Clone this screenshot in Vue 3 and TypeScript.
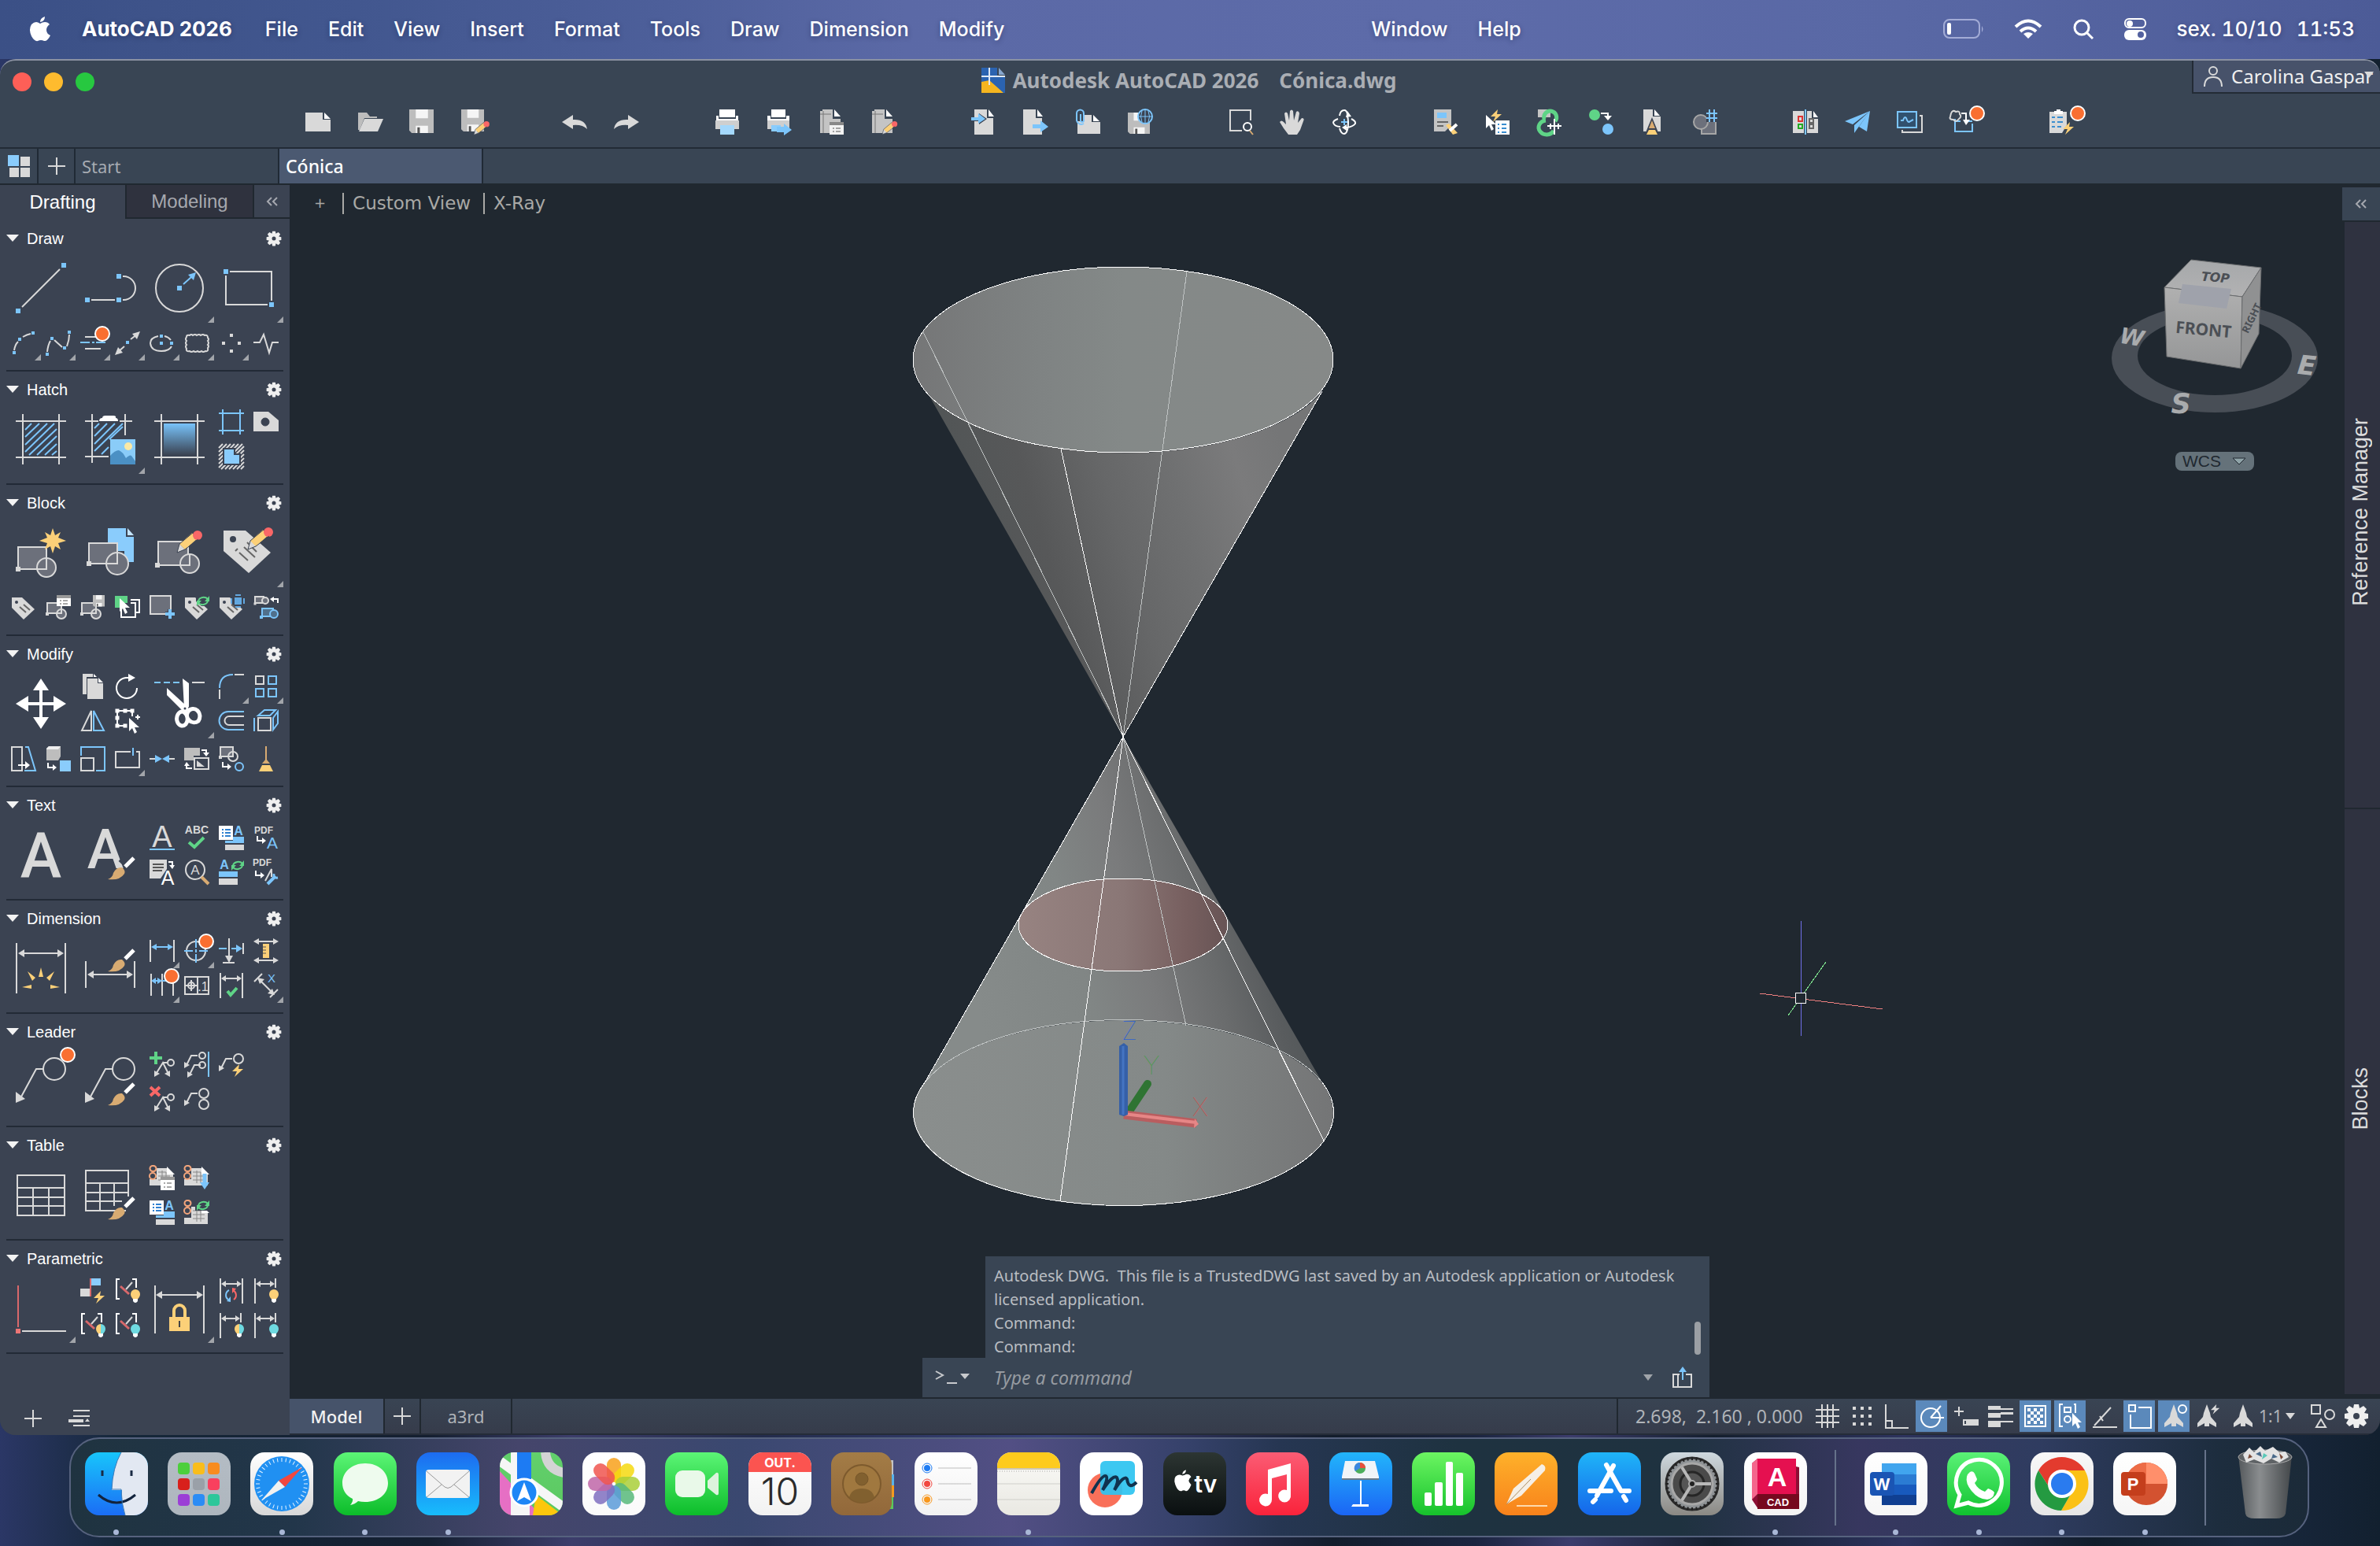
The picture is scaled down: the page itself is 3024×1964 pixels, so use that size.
<script setup lang="ts">
import { ref } from 'vue'

interface Tool {
  icon: string
  col: number
  row: number
  big?: boolean
  more?: boolean
  badge?: boolean
}
interface Section {
  title: string
  tools: Tool[]
}

const L = '#d9d9d9'
const B = '#7cc5fb'
const W = '#ffffff'
const Y = '#fcd078'
const G = '#5fd487'
const R = '#f96767'
const S = '#6c707b'
const P = '#3b4352'

const ln = (d: string, c = L, w = 2) => `<path d="${d}" stroke="${c}" stroke-width="${w}" fill="none"/>`
const fl = (d: string, c = L) => `<path d="${d}" fill="${c}"/>`
const sq = (x: number, y: number, c = B, s = 6) => `<rect x="${x - s / 2}" y="${y - s / 2}" width="${s}" height="${s}" fill="${c}"/>`
const rc = (x: number, y: number, w: number, h: number, f = 'none', c = L, sw = 2) =>
  `<rect x="${x}" y="${y}" width="${w}" height="${h}" fill="${f}" stroke="${c}" stroke-width="${sw}"/>`
const ci = (x: number, y: number, r: number, f = 'none', c = L, sw = 2) =>
  `<circle cx="${x}" cy="${y}" r="${r}" fill="${f}" stroke="${c}" stroke-width="${sw}"/>`
const at = (x: number, y: number, s: string) => `<g transform="translate(${x} ${y})">${s}</g>`
const tx = (x: number, y: number, size: number, t: string, c = L, w = 400, f = 'Liberation Sans') =>
  `<text x="${x}" y="${y}" font-size="${size}" font-weight="${w}" fill="${c}" text-anchor="middle" font-family="${f}, sans-serif">${t}</text>`

const brush = fl('M29 29Q35 27 36 21Q40 13 47 14Q52 18 50 22Q44 31 29 29Z', '#d8ab72') + ln('M51 13L62 2', W, 5)
const pencil = fl('M0 28L3 17L10 24Z', L) + fl('M3 17L19 3L26 10L10 24Z', Y) + `<circle cx="26" cy="6" r="6" fill="${R}"/>` + ln('M0 28L3 17L21 2M0 28L10 24L27 11', P, 1)
const bolt = (c = Y) => fl('M9 0L0 9H6L3 16L14 6H8Z', c)
const page = (c = L) => fl('M4 0H20V11H28V32H4Z', c) + fl('M22 0L29 9H22Z', W)
const floppy = (w: number) => `<g transform="scale(${w / 30})">` + fl('M0 0H30V29H3L0 26Z', '#bdbdbd') + fl('M8 0H23V11H8ZM8 20H23V29H8Z', '#f5f5f5') + fl('M10 22H13V29H10Z', '#555') + '</g>'
const cycle = (c = G) => ln('M2 7A7 6 0 0 1 14 5M14 8A7 6 0 0 1 2 10', c, 2) + fl('M16 1V8H10ZM0 14V7H6Z', c)
const cursor = (x: number, y: number, c = W) => at(x, y, fl('M0 0V17L4 13L7 20L10 18L7 12H13Z', c))
const hook = ln('M1 0V6H8', W, 2) + fl('M7 2L12 6L7 10Z', W)
const tag = fl('M1 3H14L30 18L16 31L1 16Z') + `<circle cx="7" cy="9" r="2" fill="${P}"/>` + ln('M11 15L19 22M16 12L24 19', '#666', 2)
const blk = rc(3, 25, 36, 28, S) + ci(39, 51, 12, S) + ln('M27 53H39V40', L) + sq(3, 53, L)
const blkS = rc(2, 10, 18, 13, S) + ci(20, 24, 6, S) + ln('M14 23H20V18', L) + sq(2, 24, L, 4)
const frame = (c = L, w = 2) => ln('M9 0V64M55 0V64M0 9H64M0 55H64', c, w)
const tagBig = fl('M0 4H28L60 32L32 58L0 30Z') + `<circle cx="12" cy="15" r="4" fill="${P}"/>` + ln('M20 32L31 42M26 25L40 38M15 30L18 27M30 19L42 31', '#666', 2)
const stackA = fl('M0 1H18V19H0Z', W) + ln('M4 6H6M8 6H15M4 10H6M8 10H15M4 14H6M8 14H15', '#2f80d0', 2) + tx(25, 13, 16, 'A', B, 700) + fl('M18 15H32V23H8V20H18Z', B) + fl('M8 25H32V32H8Z')
const hdim = (y = 7, x2 = 30) => ln(`M2 0V32M${x2} 0V32`) + ln(`M6 ${y}H${x2 - 4}`) + fl(`M3 ${y}L9 ${y - 4}V${y + 4}ZM${x2 - 1} ${y}L${x2 - 7} ${y - 4}V${y + 4}Z`)
const bracket = ln('M6 1H2V26H6M22 1H27V12', W) + ln('M7 10L18 20', '#d9686b', 3) + ln('M14 14L22 5', L, 2)
const bulb = (l: string, r: string) => fl('M20 20A6 6 0 0 1 26 14V27H24Q20 24 20 20Z', l) + fl('M32 20A6 6 0 0 0 26 14V27H28Q32 24 32 20Z', r) + fl('M23 26H29V29Q26 33 23 29Z', W)
const chain = ln('M4 1H5A3 3 0 0 1 5 8H4A3 3 0 0 1 4 1M4 10A3 3 0 0 1 4 18A3 3 0 0 1 4 10', '#f2a57c', 2)
const sheet = fl('M0 18H9V4H22L30 12V26H0Z', L) + fl('M22 2L32 12H22Z', W) + ln('M11 9H21M11 14H26M11 19H26M16 7V23M21 9V23', '#888', 1)
const twin = ln('M7 30L17 14L25 30M17 14H22') + ci(27, 14, 4) + fl('M6 24V32L13 28ZM26 24V32L19 28Z')
const zig = (x: number, y: number) => ln(`M${x} ${y + 12}L${x + 6} ${y}H${x + 14}`) + fl(`M${x - 3} ${y + 8}V${y + 16}L${x + 4} ${y + 12}Z`)
const anno = fl('M16 1L20 12L21 17L28 25V30L19 25V29H13V25L4 30V25L11 17L12 12Z')

const icons: Record<string, string> = {
  // draw
  line: ln('M8 56L56 8') + sq(3, 61) + sq(61, 3),
  polyline: ln('M8 47H38M48 17H49A15 15 0 0 1 49 47H48') + sq(3, 47) + sq(43, 47) + sq(43, 17),
  circle: ci(32, 32, 30) + sq(32, 32) + ln('M37 27L47 18', B) + fl('M53 12L50 22L43 15Z', B),
  rect: ln('M8 11H61V48M56 53H3V16') + sq(3, 11) + sq(61, 53),
  arc: ln('M4 25Q5 18 9 14M15 8Q20 5 25 4') + sq(4, 28, B, 4) + sq(11, 11, B, 4) + sq(28, 3, B, 4),
  spline: ln('M2 27Q3 18 6 13M11 12L21 21M27 20Q30 12 30 5') + sq(2, 30, B, 4) + sq(8, 10, B, 4) + sq(24, 22, B, 4) + sq(30, 2, B, 4),
  xline: ln('M6 8H22M6 23H26') + ln('M0 15H12M15 15H18M20 15H32', B),
  ray: ln('M4 27L12 20M20 11L28 5') + sq(16, 15, B, 4) + fl('M32 1L22 4L28 11ZM0 31L10 28L4 21Z'),
  ellipse: ln('M11 7Q1 9 1 16Q2 26 15 26Q25 26 28 20M19 7Q24 8 27 12') + sq(15, 7, B, 4) + sq(15, 16, B, 4) + sq(28, 16, B, 4),
  cloud: ln('M3 8Q3 5 7 6Q9 4 11 6Q14 4 16 6Q19 4 21 6Q24 4 26 6Q30 5 30 9Q32 11 30 13Q32 16 30 18Q32 20 30 22Q31 27 27 26Q24 28 22 26Q19 28 17 26Q14 28 12 26Q9 28 7 26Q2 27 3 23Q1 20 3 18Q1 16 3 13Q1 11 3 8Z'),
  points: sq(16, 6, L, 4) + sq(6, 16, L, 4) + sq(26, 16, L, 4) + sq(16, 26, L, 4),
  wave: ln('M0 15H8L13 5L20 28L24 15H32'),
  // hatch
  hatch: frame() + ln('M12 20L20 12M12 29L30 12M12 39L40 12M12 48L49 12M17 52L52 19M27 52L52 28M37 52L52 38M46 52L52 47', B),
  hatchImg: ln('M9 0V62M51 0V27M0 9H17M44 9H60M0 54H30') + fl('M18 9Q18 5 22 5Q22 2 26 2H36Q40 2 39 5Q42 5 42 9Z', W) + ln('M12 18L18 12M12 28L28 12M12 38L38 12M12 47L48 12M21 51L30 42M31 32L48 16', B) + fl('M32 32H64V64H32Z', '#8accf8') + `<circle cx="55" cy="41" r="5" fill="#fbe9a6"/>` + fl('M32 53Q38 46 43 46Q48 48 52 56Q57 51 59 53L64 60V64H32Z', '#4b90c4'),
  gradient: '<defs><linearGradient id="hg" x1="0" y1="0" x2="0" y2="1"><stop offset="0" stop-color="#78c3fa"/><stop offset="1" stop-color="#3b4352"/></linearGradient></defs>' + frame() + fl('M12 12H52V52H12Z', 'url(#hg)'),
  boundary: ln('M5 0V32M27 0V32M0 5H32M0 27H32', B),
  wipeout: fl('M0 3H19L32 14V28H0Z') + ci(15, 16, 5, P, P, 1),
  island: ln('M0 5L5 0M0 10L10 0M0 15L15 0M0 20L20 0M0 25L25 0M0 30L30 0M3 32L32 3M8 32L32 8M13 32L32 13M18 32L32 18M23 32L32 23M28 32L32 28') + fl('M5 5H21V12H28V27H5Z', P) + fl('M7 7H19V14H26V25H7Z', '#8accfc'),
  // block
  blockNew: blk + fl('M47 1L50 10L57 6L54 13L64 17L54 20L57 28L50 24L47 33L44 24L37 28L40 20L30 17L40 13L37 6L44 10Z', Y),
  blockInsert: fl('M29 1H52V12H62V44H50V30H42V20H29Z', '#8accfc') + fl('M54 1L62 10H54Z', '#c4e4fc') + rc(5, 20, 36, 26, S) + ci(41, 46, 14, S) + ln('M28 46H41V33') + sq(5, 46, L),
  blockEdit: rc(5, 18, 38, 30, S) + ci(45, 46, 12, S) + ln('M33 48H45V34') + sq(4, 48, L) + at(29, 4, pencil),
  attrEdit: tagBig + at(31, 0, pencil),
  tag,
  blkA: blkS + fl('M14 0H32V14H14Z', W) + fl('M14 0H32V4H14Z', '#999') + ln('M18 7H20M22 7H28M18 11H20M22 11H28', '#555', 1),
  blkB: blkS + at(16, 0, floppy(15)),
  blkC: fl('M0 1H16V10H8V16H0Z', G) + ln('M20 6H31V22H27M8 18V28H26V10H20', W) + cursor(6, 4),
  blkD: rc(1, 1, 26, 23, S) + ln('M20 24H32M26 18V30', P, 6) + ln('M20 24H32M26 18V30', B, 4),
  blkE: tag + fl('M15 0H32V14H22L15 8Z', P) + at(16, 0, cycle()),
  blkF: tag + fl('M15 0H32V16H22L15 10Z', P) + fl('M20 3H29V12H20Z', '#63a8e0') + ln('M16 4V11M32 4V11M21 0H28M21 15H28', '#63a8e0', 2),
  blkG: rc(2, 2, 11, 8, S) + ci(15, 7, 4, S) + sq(2, 11, L, 3) + at(21, 2, ln('M10 8V3H4', W) + fl('M5 0V7L0 3Z', W)) + rc(11, 17, 14, 10, '#50708c', B) + ci(26, 24, 5, '#50708c', B) + sq(10, 28, B, 4),
  // modify
  move: ln('M32 10V54M10 32H54', W, 4) + fl('M32 0L42 15H22ZM32 64L42 49H22ZM0 32L16 22V42ZM64 32L48 22V42Z', W),
  copy: fl('M3 0H16V4H8V26H3Z') + fl('M9 6H22V12H29V32H9Z') + fl('M23 5L29 11H23ZM17 0L21 4H17Z', W),
  rotate: ln('M20 5H14A13 13 0 1 0 28 18', W) + fl('M17 0L26 5L17 10Z', W),
  trim: ln('M0 5H8M12 5H20M24 5H32', B) + ln('M48 5H64') + fl('M36 0L44 6V36L38 38ZM16 12L40 34L35 40L16 21Z', W) + ci(39, 38, 3, P, W, 3) + ln('M36 42A7 9 0 1 0 40 58A9 10 0 0 0 36 42M43 42A8 9 0 1 1 56 54A9 9 0 0 1 43 42', W, 5),
  fillet: ln('M1 18Q1 1 18 1', B) + ln('M20 1H32M1 20V32'),
  array: rc(3, 3, 10, 10) + rc(19, 3, 10, 10, 'none', B) + rc(3, 19, 10, 10, 'none', B) + rc(19, 19, 10, 10, 'none', B),
  mirror: ln('M14 3V28H2Z') + ln('M17 3V28H30Z', B),
  stretchSel: ln('M3 3H22M3 3V22H14M22 3V10', W, 2) + sq(3, 3, W, 5) + sq(13, 3, W, 5) + sq(22, 3, W, 5) + sq(3, 12, W, 5) + sq(3, 22, W, 5) + sq(13, 22, W, 5) + cursor(18, 12) + ln('M26 11H32M29 8V14', W),
  offset: ln('M32 4H12A11 11 0 0 0 12 27H32', B) + ln('M32 10H13A5 5 0 0 0 13 21H32'),
  solidedit: rc(6, 12, 16, 16) + ln('M1 12V29M6 9L14 2H28L21 9ZM25 12L31 4V19L25 27Z', B),
  stretch: rc(1, 1, 13, 30) + ln('M18 1H22L31 31H17', B) + ln('M9 24H20', W) + fl('M18 19L24 24L18 29Z', W),
  copyTo: fl('M1 3L4 0H19V13L16 18H1Z', '#bdbdbd') + fl('M1 3L4 0H19L16 4H1Z', '#eee') + at(2, 21, hook) + fl('M18 18H32V32H18Z', '#8accfc'),
  scale: ln('M1 12V1H31V31H20', B) + rc(1, 15, 16, 16),
  breakAt: ln('M20 7H1V27H31V7H27') + ln('M23 2V12', B),
  join: ln('M0 16H8M24 16H32') + fl('M7 11L16 16L7 21ZM25 11L16 16L25 21Z', B),
  reorder: fl('M0 2H20V12H12V18H0Z', '#bdbdbd') + rc(13, 15, 18, 14) + fl('M16 18L26 26H16Z') + ln('M22 5H28V10M3 24V28H10', W) + fl('M24 8H32L28 13ZM0 25H7L3 20Z', W),
  convert: rc(2, 1, 16, 12, S) + ci(18, 13, 6) + sq(2, 14, L, 4) + at(4, 20, hook) + ci(26, 26, 5, 'none', B),
  purge: ln('M16 0V20', '#d8ab72') + fl('M16 16L21 22H11Z', '#d8ab72') + fl('M11 24H21L25 32H7Z', Y),
  // text
  mtext: tx(32, 60, 79, 'A', L, 500, 'Roboto'),
  textStyle: tx(26, 49, 70, 'A', L, 500, 'Roboto') + ln('M47 44L60 30', P, 12) + at(0, 34, brush),
  textA: tx(16, 28, 38, 'A', L) + ln('M0 31H32', B),
  spell: tx(16, 11, 14, 'ABC', L, 700) + ln('M6 22L13 28L25 16', G, 4),
  textB: stackA,
  pdfA: tx(13, 11, 12, 'PDF', L, 700) + at(4, 14, hook) + tx(24, 30, 21, 'A', B),
  textC: fl('M0 0H22V12L14 24H0Z') + ln('M4 6H18M4 10H18M4 14H16', '#555', 2) + ln('M24 3H29V9', W) + fl('M25 7H32L29 12Z', W) + tx(23, 32, 25, 'A', W),
  find: ci(14, 13, 12) + tx(14, 19, 17, 'A', L) + ln('M22 22L31 31', '#d8ab72', 4),
  textD: tx(7, 12, 16, 'A', B, 700) + at(16, 0, cycle()) + fl('M0 15H24V22H0Z', B) + fl('M0 24H24V32H0Z'),
  pdfB: tx(11, 8, 12, 'PDF', L, 700) + at(2, 14, hook) + ln('M15 27L23 12V22') + ln('M18 31L28 21', B, 4) + ln('M26 18Q25 24 31 23', B, 3),
  // dimension
  dimAuto: ln('M1 0V64M63 0V64') + ln('M6 13H58') + fl('M3 13L11 8V18ZM61 13L53 8V18Z') + fl('M32 31L35 43H29ZM15 36L25 44L21 48ZM49 36L39 44L43 48ZM8 56L20 53V58ZM56 56L44 53V58Z', Y),
  dimStyle: ln('M1 23V57M63 23V57M6 40H58') + fl('M3 40L11 35V45ZM61 40L53 35V45Z') + at(0, 7, brush),
  dimA: ln('M1 2V30M31 2V30') + ln('M4 11H28', B) + fl('M2 11L9 7V15ZM30 11L23 7V15Z', B),
  dimB: ci(15, 16, 12) + ln('M15 1V12M15 20V31M0 16H11M19 16H30M15 14V18', B),
  dimC: ln('M13 0V22M5 31H20M31 6V20') + fl('M8 22H18L13 31Z') + ln('M0 13H10M16 13H22', B) + fl('M22 8L30 13L22 18Z', B),
  dimD: ln('M2 4H30M2 28H30') + fl('M0 4L7 0V8ZM32 4L25 0V8ZM0 28L7 24V32ZM32 28L25 24V32Z') + fl('M12 7H20V25H12Z', Y) + ln('M12 11H16M12 15H16M12 19H16', '#555', 1),
  dimE: ln('M2 1V29M16 1V29M30 8V29') + ln('M4 10H14M16 10H22', B) + fl('M2 10L8 6V14ZM16 10L10 6V14Z', B),
  dimF: rc(1, 5, 30, 22) + ln('M17 5V27') + ci(9, 16, 4) + ln('M9 9V23M2 16H16') + tx(24, 23, 16, '.1', L),
  dimG: hdim() + ln('M11 23L15 28L23 19', G, 4),
  dimH: ln('M1 11L11 1M21 31L31 21M8 9L24 25') + fl('M5 6L14 8L8 14ZM27 28L18 26L24 20Z') + tx(23, 12, 15, 'X', B),
  // leader
  leader: ci(49, 16, 14) + ln('M35 16H26L6 53') + fl('M0 45V59L12 54Z'),
  leaderStyle: ci(49, 16, 14) + ln('M35 16H26L6 53') + fl('M0 45V59L12 54Z') + at(0, 33, brush),
  ldA: twin + ln('M0 8H16M8 0V16', G, 4),
  ldB: zig(3, 5) + ci(23, 5, 4) + zig(7, 17) + ci(23, 17, 4) + ln('M31 0V32', B),
  ldC: zig(3, 9) + ci(25, 9, 6) + at(17, 16, bolt()),
  ldD: twin + ln('M1 1L13 12M13 1L1 12', R, 4),
  ldE: zig(3, 9) + ci(25, 9, 6) + ci(25, 23, 6),
  // table
  table: rc(2, 7, 60, 51) + ln('M2 23H62M2 35H62M2 46H62M22 23V58M42 23V58'),
  tableStyle: ln('M52 52H1V1H55V34M1 17H55M1 29H55M1 40H47M19 17V52M37 17V46') + at(0, 34, brush),
  tbA: sheet + chain + fl('M14 15H32V32H14Z', W) + fl('M14 15H32V19H14Z', '#999') + ln('M18 23H20M22 23H28M18 28H20M22 28H28', '#555', 1),
  tbB: sheet + chain + ln('M26 11V24', B, 5) + fl('M20 22H32L26 31Z', B),
  tbC: stackA,
  tbD: at(0, 5, sheet) + fl('M14 0H32V14H14Z', P) + chain + at(16, 0, cycle()),
  // parametric
  perp: ln('M3 3V56', '#d9686b') + ln('M8 61H64') + sq(3, 61, '#ec7575'),
  parA: fl('M0 13H12V23H0Z') + fl('M14 0H26V9H14Z', '#8accfc') + ln('M13 0V23', '#d9686b') + at(17, 16, bolt()),
  parB: bracket + bulb(Y, Y),
  parC: bracket + bulb(Y, '#6ed9e0'),
  parD: bracket + bulb('#6ed9e0', '#6ed9e0'),
  lock: ln('M1 3V64M63 3V64M6 15H58') + fl('M2 15L10 10V20ZM62 15L54 10V20Z') + fl('M19 43H45V61H19Z', Y) + ln('M25 43V35A7 7 0 0 1 39 35V43', Y, 4) + ln('M32 48V56', '#444', 2),
  pmA: hdim(7) + ln('M13 15A7 7 0 0 0 12 27', B) + ln('M18 15A7 7 0 0 1 19 27', R) + fl('M10 29L15 23V30Z', B) + fl('M22 13L17 19V12Z', R),
  pmB: hdim(7, 28) + fl('M19 12H32V32H19Z', P) + bulb(Y, Y),
  pmC: hdim(7, 28) + fl('M19 12H32V32H19Z', P) + bulb(Y, '#6ed9e0'),
  pmD: hdim(7, 28) + fl('M19 12H32V32H19Z', P) + bulb('#6ed9e0', '#6ed9e0'),
  // toolbar
  new: fl('M0 4H22V13H32V28H0Z') + fl('M24 4L32 12H24Z', W),
  open: fl('M1 4H12L16 9H25V11H9L3 26H1Z', '#bdbdbd') + fl('M9 12H33L26 28H2Z'),
  save: floppy(31),
  saveAs: floppy(29) + `<g transform="translate(16 15) scale(.62)">${pencil}</g>`,
  undo: fl('M0 16L14 7V13Q30 12 32 25Q26 19 14 20V25Z'),
  redo: fl('M32 16L18 7V13Q2 12 0 25Q6 19 18 20V25Z'),
  print: fl('M6 0H26V10H6Z', W) + fl('M2 8H5V12H27V8H30V22H27V19H5V22H2Z', W) + fl('M1 14H31V25H1Z', '#cfcfcf') + fl('M7 20H25V32H7Z', '#a4d8fc'),
  printTo: fl('M6 0H24V10H6Z', W) + fl('M1 8H5V12H25V8H29V14H1Z', W) + fl('M1 14H29V25H1Z', '#cfcfcf') + fl('M6 20H18V28H6Z', '#8accfc') + fl('M13 22H22V18L32 26L22 33V29H13Z', B),
  pageSetup: fl('M2 2H5V0H18V12H28V30H2Z', '#c4c4c4') + fl('M20 0L28 9H20Z', W) + ln('M2 6H16M6 2V30', '#777', 1) + fl('M14 17H32V32H14Z', '#f2f2f2') + fl('M14 16H32V20H14Z', '#888') + ln('M18 24H20M22 24H28M18 28H20M22 28H28', '#555', 1),
  pageEdit: fl('M2 2H5V0H18V12H28V30H2Z', '#c4c4c4') + fl('M20 0L28 9H20Z', W) + ln('M2 6H16M6 2V30', '#777', 1) + `<g transform="translate(15 15) scale(.6)">${pencil}</g>`,
  import: page() + fl('M0 10H10V5L20 12L10 19V15H0Z', P) + fl('M0 10H9V5L18 12L9 18V14H0Z', B),
  export: at(-4, 0, page()) + fl('M12 19H22V14L32 22L22 29V24H12Z', B),
  attach: at(3, 7, fl('M0 8H8V0H18V9H29V24H0Z') + fl('M20 0L28 8H20Z', W)) + ln('M7 6V14A2 2 0 0 0 11 14V5A4 4 0 0 0 2 5V14A6 6 0 0 0 11 18', B),
  saveWeb: at(1, 4, floppy(28)) + ci(23, 9, 9, P, B) + ln('M23 0V18M14 9H32M19 2Q16 9 19 16M27 2Q30 9 27 16', B, 1),
  zoomWin: ln('M18 27H3V1H29V14') + ci(25, 22, 5, 'none', W) + ln('M28 27L32 32', '#d8ab72'),
  pan: fl('M11 32L5 24L0 16Q2 13 5 16L8 19L6 5Q8 2 10 5L12 14L13 2Q15 -1 17 2L18 14L21 3Q24 1 25 5L23 17L28 11Q32 11 30 15L26 26L22 32Z'),
  orbit: ln('M10 8Q11 1 16 1Q19 1 20 6M10 24Q12 31 16 31Q21 30 21 16Q21 11 20 9M8 12Q2 14 2 17Q4 22 11 22M25 12Q31 15 30 18Q27 22 19 23', W) + ln('M12 16H20M16 12V20', B) + fl('M20 2L25 9L18 10ZM19 19V27L13 23Z', W),
  tbProp: fl('M2 0H24V20L16 28H2Z', '#c4c4c4') + fl('M6 4H18V11H6Z', B) + ln('M6 16H20M6 21H14', '#666', 2) + fl('M17 20L21 18L32 30L26 32Z', Y) + ln('M22 27L31 19', W, 4),
  tbSel: at(8, 0, bolt()) + cursor(2, 7) + fl('M14 14H32V32H14Z', W) + ln('M17 19H19M22 19H28M17 24H19M22 24H28M17 29H19M22 29H28', '#3a8ed0', 2),
  tbCount: fl('M2 0H18V10H2Z', '#c4c4c4') + ln('M10 12A8 8 0 1 1 24 15M12 14A10 9 0 1 0 22 27', G, 5) + ln('M14 21H32M23 12V32M18 18V25M28 18V25', W, 2),
  tbSwap: ci(8, 7, 7, G, G, 0) + ci(25, 25, 7, B, B, 0) + ln('M16 5H25V9', W) + fl('M20 8H30L25 14Z', W),
  tbPurge: fl('M4 0H16V9H26V28H4Z') + fl('M18 0L25 8H18Z', W) + fl('M15 10L20 22L24 32H6L10 22Z', P) + fl('M15 14L19 24H11Z', '#d8ab72') + fl('M11 26H19L22 32H8Z', Y),
  tbHash: rc(12, 14, 18, 17, S, '#a6a6a6') + ci(11, 16, 9, S, '#a6a6a6') + fl('M18 0H32V16H18Z', P) + ln('M22 0V16M28 0V16M18 5H32M18 11H32', B),
  compare: fl('M0 2H14V30H0Z') + fl('M18 2H24V12H32V30H18Z') + fl('M26 2L32 10H26Z', W) + ln('M16 0V32', B) + rc(7, 9, 5, 6, 'none', '#d33', 2) + rc(7, 19, 5, 5, 'none', '#2a2', 2) + rc(21, 12, 5, 5, 'none', '#666', 2) + rc(21, 19, 5, 5, 'none', '#666', 2),
  send: fl('M32 2L0 15L10 19ZM32 2L12 20V30L17 23ZM32 2L18 22L28 28Z', B),
  sheetSet: rc(1, 3, 24, 20, '#31516e', B) + ln('M5 14H8Q10 8 12 11Q14 18 17 15L21 13', B) + ln('M29 8H32V29H7V26'),
  markup: ln('M8 12V28H30V18M8 15H15M23 15H30', B) + ln('M3 5Q5 0 9 3Q14 1 14 6Q17 9 13 12Q9 17 6 13Q0 13 2 9Z') + ln('M16 5H22V14', W) + fl('M18 13H27L22 20Z', W),
  paste: fl('M0 3H22V20L16 30H0Z') + fl('M6 2H9V0H14V2H17V6H6Z', W) + ln('M3 10H7M10 10H17M3 16H7M10 16H17M3 22H7M10 22H15', '#3a8ed0', 2) + at(17, 16, bolt()),
  // status bar
  grid: ln('M9 1V31M16 1V31M23 1V31M1 8H31M1 16H31M1 24H31'),
  snap: [6, 16, 26].map((x) => [6, 16, 26].map((y) => sq(x, y, L, 4)).join('')).join(''),
  ortho: ln('M2 1V31H31M2 22H10V31'),
  polar: ci(15, 18, 12, 'none', W) + ln('M15 18H32M15 18L28 3', W),
  dyn: ln('M1 10H13M7 4V16') + fl('M12 20H32V28H12Z') + fl('M14 22H16V26H14Z', P),
  lwt: fl('M0 3H16V6H32V8H0Z') + fl('M0 12H16V11H32V14H16V18H0Z') + fl('M0 22H32V24H16V30H0Z'),
  transp: rc(3, 3, 26, 26, 'none', W) + [0, 1, 2, 3, 4].map((r) => [0, 1, 2, 3, 4].map((c) => ((r + c) % 2 ? '' : sq(8 + c * 4, 8 + r * 4, W, 4))).join('')).join(''),
  cycleSel: ln('M7 1H3V29H7M21 1H23V12', W) + rc(9, 5, 8, 6, 'none', W) + ci(13, 20, 4, 'none', W) + at(19, 12, fl('M0 0V17L4 13L7 20L10 18L7 12H12Z', W)),
  angle: ln('M1 30H32M3 28L24 5M10 16L14 22'),
  osnap: rc(3, 2, 8, 8, 'none', W) + ln('M15 5H31V31H5V14', W),
  annoA: anno + ci(27, 7, 5, 'none', W),
  annoB: at(-2, 0, anno) + at(19, 1, `<g transform="scale(.8)">${bolt(L)}</g>`),
  annoC: anno,
  workspace: rc(3, 2, 11, 11) + ci(26, 14, 6) + ln('M15 20L21 30H9Z'),
  gear: fl('M13 1H19L20 6L25 3L29 7L26 12L31 13V19L26 20L29 25L25 29L20 26L19 31H13L12 26L7 29L3 25L6 20L1 19V13L6 12L3 7L7 3L12 6Z', '#efefef') + ci(16, 16, 4, P, P, 0),
}

const t = (icon: string, col: number, row: number, extra: Partial<Tool> = {}): Tool => ({ icon, col, row, ...extra })
const big = (icon: string, col: number, extra: Partial<Tool> = {}): Tool => ({ icon, col, row: 1, big: true, ...extra })
const more = { more: true }

const sections: Section[] = [
  { title: 'Draw', tools: [big('line', 1), big('polyline', 3), big('circle', 5, more), big('rect', 7, more), t('arc', 1, 3, more), t('spline', 2, 3, more), t('xline', 3, 3, { more: true, badge: true }), t('ray', 4, 3, more), t('ellipse', 5, 3, more), t('cloud', 6, 3, more), t('points', 7, 3, more), t('wave', 8, 3)] },
  { title: 'Hatch', tools: [big('hatch', 1), big('hatchImg', 3, more), big('gradient', 5), t('boundary', 7, 1), t('wipeout', 8, 1), t('island', 7, 2)] },
  { title: 'Block', tools: [big('blockNew', 1), big('blockInsert', 3), big('blockEdit', 5), big('attrEdit', 7, more), t('tag', 1, 3), t('blkA', 2, 3), t('blkB', 3, 3), t('blkC', 4, 3), t('blkD', 5, 3), t('blkE', 6, 3), t('blkF', 7, 3), t('blkG', 8, 3)] },
  { title: 'Modify', tools: [big('move', 1), t('copy', 3, 1), t('rotate', 4, 1), big('trim', 5, more), t('fillet', 7, 1, more), t('array', 8, 1, more), t('mirror', 3, 2), t('stretchSel', 4, 2), t('offset', 7, 2), t('solidedit', 8, 2), t('stretch', 1, 3), t('copyTo', 2, 3), t('scale', 3, 3), t('breakAt', 4, 3, more), t('join', 5, 3), t('reorder', 6, 3), t('convert', 7, 3), t('purge', 8, 3)] },
  { title: 'Text', tools: [big('mtext', 1), big('textStyle', 3), t('textA', 5, 1), t('spell', 6, 1), t('textB', 7, 1), t('pdfA', 8, 1), t('textC', 5, 2), t('find', 6, 2), t('textD', 7, 2), t('pdfB', 8, 2)] },
  { title: 'Dimension', tools: [big('dimAuto', 1), big('dimStyle', 3), t('dimA', 5, 1, more), t('dimB', 6, 1, { more: true, badge: true }), t('dimC', 7, 1), t('dimD', 8, 1), t('dimE', 5, 2, { more: true, badge: true }), t('dimF', 6, 2), t('dimG', 7, 2), t('dimH', 8, 2, more)] },
  { title: 'Leader', tools: [big('leader', 1, { badge: true }), big('leaderStyle', 3), t('ldA', 5, 1), t('ldB', 6, 1), t('ldC', 7, 1), t('ldD', 5, 2), t('ldE', 6, 2)] },
  { title: 'Table', tools: [big('table', 1), big('tableStyle', 3), t('tbA', 5, 1), t('tbB', 6, 1), t('tbC', 5, 2), t('tbD', 6, 2)] },
  { title: 'Parametric', tools: [big('perp', 1, more), t('parA', 3, 1), t('parB', 4, 1), t('parC', 3, 2), t('parD', 4, 2), big('lock', 5, more), t('pmA', 7, 1), t('pmB', 8, 1), t('pmC', 7, 2), t('pmD', 8, 2)] },
]

const menus = ['File', 'Edit', 'View', 'Insert', 'Format', 'Tools', 'Draw', 'Dimension', 'Modify']
const menusRight = ['Window', 'Help']

const toolbar: string[][] = [
  ['new', 'open', 'save', 'saveAs'],
  ['undo', 'redo'],
  ['print', 'printTo', 'pageSetup', 'pageEdit'],
  ['import', 'export', 'attach', 'saveWeb'],
  ['zoomWin', 'pan', 'orbit'],
  ['tbProp', 'tbSel', 'tbCount', 'tbSwap', 'tbPurge', 'tbHash'],
  ['compare', 'send', 'sheetSet', 'markup'],
  ['paste'],
]
const badged = ['markup', 'paste']

const statusA = [
  { icon: 'grid', on: false }, { icon: 'snap', on: false }, { icon: 'ortho', on: false }, { icon: 'polar', on: true },
  { icon: 'dyn', on: false }, { icon: 'lwt', on: false }, { icon: 'transp', on: true }, { icon: 'cycleSel', on: true },
  { icon: 'angle', on: false }, { icon: 'osnap', on: true }, { icon: 'annoA', on: true }, { icon: 'annoB', on: false }, { icon: 'annoC', on: false },
]

const history = 'Autodesk DWG.  This file is a TrustedDWG last saved by an Autodesk application or Autodesk licensed application.\nCommand:\nCommand:'
const command = ref('')

// dock artwork, 80 x 80 tiles
const tile = (id: string, a: string, b: string) =>
  `<defs><linearGradient id="${id}" x1="0" y1="0" x2="0" y2="1"><stop offset="0" stop-color="${a}"/><stop offset="1" stop-color="${b}"/></linearGradient><clipPath id="${id}c"><rect width="80" height="80" rx="18"/></clipPath></defs><rect width="80" height="80" rx="18" fill="url(#${id})"/>`
const petals = ['#f8a11b', '#f6d90f', '#a9cf38', '#57b87a', '#5a9bd8', '#7f6fc0', '#c066a8', '#f0554f']
const teeth = Array.from({ length: 36 }, (_, i) => `<path d="M40 6V10" stroke="#222" stroke-width="2" transform="rotate(${i * 10} 40 40)"/>`).join('')
const ticks = Array.from({ length: 36 }, (_, i) => `<path d="M40 7V12" stroke="#e6f3ff" stroke-width="1" transform="rotate(${i * 10} 40 40)"/>`).join('')
const pads = ['#4ccf3c', '#f9bd1c', '#f88c1f', '#d8201c', '#9aa0a8', '#f9405e', '#9b3fd6', '#2b8cf5', '#2dc79a']

interface App { name: string; art: string; open?: boolean; gap?: boolean }
const dock: App[] = [
  { name: 'Finder', open: true, art: tile('fi', '#18c5fb', '#1b6df5') + `<g clip-path="url(#fic)">${fl('M46 0H80V80H51Q46 64 47 48H34Q35 20 46 0Z', '#e2e8f2')}</g>` + ln('M22 23V30M59 23V30', '#1a2a44', 3) + ln('M17 54Q40 74 64 54', '#12233d', 3) + ln('M46 0Q35 20 34 47H46Q46 64 51 80', '#3d7cb8', 1) },
  { name: 'Launchpad', art: tile('lp', '#b4bcc4', '#aeb6be') + pads.map((c, i) => `<rect x="${13 + (i % 3) * 19}" y="${13 + Math.floor(i / 3) * 20}" width="15" height="15" rx="4" fill="${c}"/>`).join('') },
  { name: 'Safari', open: true, art: tile('sf', '#ffffff', '#d8d8d8') + ci(40, 40, 35, '#2090f2', '#2090f2', 0) + ticks + fl('M66 19L44 44L36 36Z', '#f2473f') + fl('M14 61L44 44L36 36Z', '#f1f1f1') },
  { name: 'Messages', open: true, art: tile('ms', '#5cf576', '#0cbd2a') + fl('M40 14C57 14 69 25 69 39C69 53 57 63 40 63Q35 63 31 62Q27 66 21 67Q25 62 24 59C15 55 11 47 11 39C11 25 23 14 40 14Z', '#eefbee') },
  { name: 'Mail', open: true, art: tile('ml', '#1d6bf0', '#18bdfc') + `<rect x="12" y="22" width="56" height="36" rx="4" fill="#f2f2f2"/>` + ln('M13 24L36 44Q40 47 44 44L67 24M13 57L32 41M67 57L48 41', '#999', 1) },
  { name: 'Maps', art: tile('mp', '#62d06c', '#5bc860') + `<g clip-path="url(#mpc)">${fl('M0 24L52 80H0Z', '#e66fc4')}${fl('M46 54L80 80H42Z', '#fcc70d')}${ln('M-4 8L84 72', '#f6f6f6', 12)}${ln('M26 -4V84', '#f6f6f6', 24)}${ln('M31 0V34', '#1d7bf3', 18)}${ln('M58 0Q60 22 82 26', '#d4d4d4', 12)}</g>` + ci(31, 51, 17, '#1d86f6', '#fff', 3) + fl('M31 38L40 62L31 57L22 62Z', W) },
  { name: 'Photos', art: tile('ph', '#ffffff', '#fafafa') + petals.map((c, i) => `<rect x="31" y="7" width="18" height="31" rx="9" fill="${c}" opacity=".85" transform="rotate(${i * 45} 40 40)"/>`).join('') },
  { name: 'FaceTime', art: tile('ft', '#5cf576', '#0cbd2a') + `<rect x="13" y="23" width="38" height="34" rx="9" fill="#e9f9e9"/>` + fl('M54 36L65 26Q68 25 68 29V52Q68 55 65 54L54 45Z', '#dcf3dc') },
  { name: 'Calendar', art: tile('ca', '#ffffff', '#f2f2f2') + `<g clip-path="url(#cac)">${fl('M0 0H80V25H0Z', '#fb5450')}</g>` + tx(40, 19, 16, 'OUT.', W, 700, 'Inter') + tx(40, 67, 48, '10', '#2b2b2b', 300, 'Inter') },
  { name: 'Contacts', art: fl('M72 10H79V28H72Z', '#c4c4c4') + fl('M72 28H80V42H72Z', '#58b2ea') + fl('M72 42H80V57H72Z', '#f49a20') + fl('M72 57H79V72H72Z', '#5cc85c') + tile('co', '#a37c46', '#92683a').replace('<rect width="80" height="80" rx="18" fill', '<rect width="77" height="80" rx="16" fill') + ci(39, 40, 24, '#a0783f', '#7d5a2d', 2) + ci(39, 34, 8, '#81602f', '#76562a', 1) + fl('M23 57Q26 46 39 46Q52 46 55 57Q48 64 39 64Q30 64 23 57Z', '#81602f') },
  { name: 'Reminders', art: tile('re', '#ffffff', '#f2f2f2') + ['#1d7bf3', '#f2473f', '#f8971d'].map((c, i) => ci(16, 20 + i * 20, 6, 'none', c, 1) + ci(16, 20 + i * 20, 4, c, c, 0) + ln(`M30 ${20 + i * 20}H72`, '#bdbdbd', 1)).join('') },
  { name: 'Notes', open: true, art: tile('no', '#fbfbf8', '#e9e8e2') + `<g clip-path="url(#noc)">${fl('M0 0H80V20H0Z', '#fdcb1d')}</g>` + ln('M0 21H80', '#a89a70', 1) + ln('M0 24H80', '#aaa', 1).replace('fill="none"', 'fill="none" stroke-dasharray="1 2"') + ln('M0 40H80M0 60H80', '#cfcfca', 1) },
  { name: 'Freeform', art: tile('fr', '#ffffff', '#ffffff') + ci(32, 48, 22, '#f9705a', '#f9705a', 0) + `<rect x="26" y="11" width="44" height="43" rx="6" fill="#2ec4f0" opacity=".93"/>` + ln('M15 52Q28 28 33 30Q37 32 29 48Q42 28 47 32Q50 36 44 48Q56 28 60 34Q62 48 72 38', '#10334f', 4) },
  { name: 'TV', art: tile('tv', '#2c3532', '#0a0f10') + `<g transform="translate(12 24) scale(.56)">${fl('M22 10Q26 9 30 7Q38 6 42 13Q31 20 42 31Q36 46 30 45Q25 42 20 45Q12 47 6 31Q0 14 11 9Q16 7 22 10ZM22 7Q22 0 30 -3Q31 5 22 7Z', W)}</g>` + tx(54, 51, 30, 'tv', W, 600, 'Inter') },
  { name: 'Music', art: tile('mu', '#fb5c74', '#fa233b') + fl('M28 22L57 14V54A8 8 0 1 1 52 48V28L33 33V60A8 8 0 1 1 28 53Z', W) },
  { name: 'Keynote', art: tile('ke', '#22b5fb', '#1b65f5') + fl('M20 11H58L63 31V35H16V31Z', '#f0f4f8') + ln('M16 34H63', '#6b7a88', 2) + ci(39, 20, 7, '#4cae5c', '#4cae5c', 0) + fl('M39 20V13A7 7 0 0 1 46 20Z', '#e8503c') + fl('M39 20V13A7 7 0 0 0 33 24Z', '#3b86e0') + ln('M40 36V67', W, 2) + fl('M30 66H50V69H28Z', W) },
  { name: 'Numbers', art: tile('nu', '#6cf562', '#16c22c') + `<rect x="16" y="51" width="9" height="17" rx="2" fill="#fff"/><rect x="29" y="38" width="10" height="30" rx="2" fill="#fff"/><rect x="43" y="12" width="9" height="56" rx="2" fill="#fff"/><rect x="56" y="26" width="9" height="42" rx="2" fill="#fff"/>` },
  { name: 'Pages', art: tile('pa', '#feb12a', '#f8821b') + fl('M15 66L24 46L60 15Q66 17 64 23L34 55Z', '#f6efe4') + ln('M15 66L46 34', '#a88c64', 1) + ln('M28 68H67', '#fdd9ac', 2) },
  { name: 'App Store', art: tile('as', '#1fb5f8', '#1565ea') + `<g stroke-linecap="round">${ln('M36 16L54 48M58 56L61 61', W, 6)}${ln('M45 17L24 55M22 60L19 63', W, 6)}${ln('M15 49H42M55 49H65', W, 6)}</g>` },
  { name: 'System Settings', art: tile('ss', '#cfd9df', '#8b8984') + ci(40, 40, 33, '#8f9396', '#2c2c2c', 3) + teeth + ci(40, 40, 26, '#4a4a4a', '#a8a8a8', 3) + ci(40, 40, 15, '#555', '#262626', 3) + ln('M40 40H64M40 40L27 61M40 40L27 19', '#b8b8b8', 4) + ci(40, 40, 4, '#222', '#aaa', 2) },
  { name: 'AutoCAD', open: true, art: tile('ac', '#ffffff', '#f4f4f4') + fl('M10 14L17 8H66V18L70 19V72H18L10 60Z', '#8c0f35') + fl('M17 8H66V53H17Z', '#e51050') + fl('M17 53H70V72H17Z', '#76091f') + fl('M10 14L17 8V53L10 60Z', '#f4668c') + tx(42, 43, 34, 'A', W, 700) + tx(43, 68, 13, 'CAD', W, 700) },
  { name: 'Word', gap: true, open: true, art: tile('wo', '#ffffff', '#f6f6f6') + fl('M22 14H66V28H22Z', '#41a5ee') + fl('M22 28H66V41H22Z', '#2b7cd3') + fl('M22 41H66V54H22Z', '#185abd') + fl('M22 54H66V67H22Z', '#103f91') + `<rect x="7" y="25" width="31" height="30" rx="4" fill="#1a55b4"/>` + tx(22, 48, 22, 'W', W, 700) },
  { name: 'WhatsApp', open: true, art: tile('wa', '#5bf277', '#10c22f') + ln('M12 68L16 54A29 29 0 1 1 27 64Z', W, 5) + fl('M29 25Q33 23 35 27L38 34Q38 36 35 39Q39 47 48 50L52 46Q58 48 60 51Q59 59 51 60Q40 60 31 49Q23 39 25 31Q26 27 29 25Z', W) },
  { name: 'Chrome', open: true, art: tile('ch', '#f8f8f8', '#e6e6e6') + fl('M10 23A34 34 0 0 1 69 23H40L26 48Z', '#e33b2e') + fl('M69 23A34 34 0 0 1 39 74L54 48L40 23Z', '#fbc116') + fl('M10 23A34 34 0 0 0 39 74L54 48H26Z', '#249a41') + ci(40, 40, 16, '#2a7bef', '#fff', 4) },
  { name: 'PowerPoint', open: true, art: tile('pp', '#ffffff', '#f6f6f6') + ci(42, 40, 27, '#d35230', '#d35230', 0) + fl('M42 13A27 27 0 0 1 69 40H42Z', '#ff8f6b') + fl('M42 13A27 27 0 0 0 15 40H42Z', '#ed6c47') + `<rect x="10" y="25" width="31" height="30" rx="4" fill="#c43e1c"/>` + tx(25, 48, 22, 'P', W, 700) },
  { name: 'Trash', gap: true, art: '<defs><linearGradient id="tr" x1="0" x2="1"><stop offset="0" stop-color="#55595c"/><stop offset=".4" stop-color="#8a8d8f"/><stop offset="1" stop-color="#43474a"/></linearGradient></defs>' + fl('M6 4H74L66 78Q64 84 54 84H27Q16 84 15 78Z', 'url(#tr)') + `<ellipse cx="40" cy="6" rx="34" ry="9" fill="#5f6366" stroke="#a8a8a8" stroke-width="1"/>` + fl('M12 3L20 -6L26 0L34 -8L40 -2L50 -7L58 0L66 -1L70 6L58 13L48 8L38 14L26 9L16 13Z', '#e3e3e3') + fl('M28 2L34 -1L36 6ZM50 2L56 6L48 8Z', '#4a6a8a') + fl('M38 1L43 4L36 9Z', '#5ac8b8') + fl('M58 1L63 6L60 9ZM20 2L24 6L18 8Z', '#7a4a38') },
]
</script>

<template>
  <div class="desktop">
    <header class="menubar">
      <svg class="apple" viewBox="0 0 26 32" aria-hidden="true"><path d="M13 9Q16 7 19 7Q23 7 25 10Q21 13 21 17Q21 22 26 24Q22 32 18 31Q14 29 10 31Q6 32 2 25Q-2 16 2 10Q5 7 8 7Q10 7 13 9ZM13 7Q13 2 19 0Q19 6 13 7Z" fill="#fff" /></svg>
      <nav class="menus">
        <a href="#" class="app-name">AutoCAD 2026</a>
        <a v-for="m in menus" :key="m" href="#">{{ m }}</a>
      </nav>
      <nav class="menus menus-right">
        <a v-for="m in menusRight" :key="m" href="#">{{ m }}</a>
      </nav>
      <div class="tray">
        <svg width="52" height="26" viewBox="0 0 52 26"><rect x="1" y="1" width="45" height="23" rx="7" fill="none" stroke="#a3acd6" stroke-width="2" /><rect x="5" y="5" width="5" height="15" rx="2" fill="#fff" /><path d="M49 9Q52 13 49 17Z" fill="#a3acd6" /></svg>
        <svg width="36" height="26" viewBox="0 0 36 26" fill="none" stroke="#fff" stroke-width="4"><path d="M2 10Q18 -5 34 10M8 16Q18 7 28 16" /><path d="M18 25L12 19Q18 15 24 19Z" fill="#fff" stroke="none" /></svg>
        <svg width="28" height="28" viewBox="0 0 28 28" fill="none" stroke="#fff" stroke-width="3"><circle cx="12" cy="12" r="9" /><path d="M18 18L26 26" /></svg>
        <svg width="28" height="28" viewBox="0 0 28 28"><rect x="1" y="1" width="26" height="11" rx="5" fill="none" stroke="#fff" stroke-width="2" /><circle cx="7" cy="7" r="4" fill="#fff" /><rect x="0" y="15" width="28" height="13" rx="6" fill="#fff" /><circle cx="21" cy="21" r="4" fill="#53619f" /></svg>
        <time><span>sex. 10/10</span><span>11:53</span></time>
      </div>
    </header>

    <main class="window">
      <div class="titlebar">
        <div class="lights"><button class="red" aria-label="Close"></button><button class="yellow" aria-label="Minimise"></button><button class="green" aria-label="Zoom"></button></div>
        <h1><svg width="30" height="32" viewBox="0 0 30 32"><path d="M0 0H20V12H30V32H0Z" fill="#2b63b0" /><path d="M22 0L30 9H22Z" fill="#88a8d0" /><path d="M0 18L10 16L28 32H0Z" fill="#f5b51f" /><path d="M10 0V22M0 11H30" stroke="#dfe9f6" stroke-width="2" /></svg><span>Autodesk AutoCAD 2026</span><span>Cónica.dwg</span></h1>
        <button class="user"><svg width="26" height="28" viewBox="0 0 26 28" fill="none" stroke="#d9d9d9" stroke-width="2"><circle cx="13" cy="7" r="5" /><path d="M2 27Q2 15 13 15Q24 15 24 27" /></svg><span>Carolina Gaspar</span><i class="caret"></i></button>
      </div>

      <div class="toolbar">
        <div v-for="(group, g) in toolbar" :key="g" class="tool-group">
          <button v-for="name in group" :key="name" :aria-label="name">
            <svg width="32" height="32" viewBox="0 0 32 32" v-html="icons[name]"></svg>
            <i v-if="badged.includes(name)" class="badge"></i>
          </button>
        </div>
      </div>

      <div class="filetabs">
        <button class="cell" aria-label="Files"><svg width="28" height="28" viewBox="0 0 28 28"><path d="M0 0H14V14H0Z" fill="#8accfc" /><path d="M16 2H28V14H16ZM2 16H14V28H2ZM16 16H28V28H16Z" fill="#d9d9d9" /></svg></button>
        <button class="cell" aria-label="New tab"><svg width="24" height="24" viewBox="0 0 24 24" stroke="#d9d9d9" stroke-width="2"><path d="M12 1V23M1 12H23" /></svg></button>
        <button class="filetab">Start</button>
        <button class="filetab active">Cónica</button>
      </div>

      <div class="body">
        <aside class="palette">
          <div class="palette-tabs">
            <button class="on">Drafting</button>
            <button class="off">Modeling</button>
            <button class="fold" aria-label="Collapse"><svg width="14" height="12" viewBox="0 0 14 12" fill="none" stroke="#a5a8af" stroke-width="2"><path d="M6 1L1 6L6 11M13 1L8 6L13 11" /></svg></button>
          </div>
          <section v-for="s in sections" :key="s.title" class="section">
            <h2><i class="twist"></i><span>{{ s.title }}</span><svg width="20" height="20" viewBox="0 0 32 32" v-html="icons.gear"></svg></h2>
            <div class="grid" :class="{ tall: s.tools.some((x) => x.row === 3) }">
              <button v-for="x in s.tools" :key="x.icon" :class="['tool', { big: x.big }]" :aria-label="x.icon" :style="{ gridColumnStart: x.col, gridRowStart: x.row }">
                <svg v-if="x.big" width="64" height="64" viewBox="0 0 64 64" v-html="icons[x.icon]"></svg>
                <svg v-else width="32" height="32" viewBox="0 0 32 32" v-html="icons[x.icon]"></svg>
                <i v-if="x.more" class="more"></i>
                <i v-if="x.badge" class="badge"></i>
              </button>
            </div>
          </section>
          <div class="palette-foot">
            <button aria-label="Add"><svg width="22" height="22" viewBox="0 0 22 22" stroke="#d9d9d9" stroke-width="2"><path d="M11 0V22M0 11H22" /></svg></button>
            <button aria-label="List"><svg width="28" height="22" viewBox="0 0 28 22"><path d="M6 0H27V2H6ZM6 7H27V9H6ZM0 12H19V16H0ZM6 19H27V21H6ZM21 15L24 11L27 15Z" fill="#d9d9d9" /></svg></button>
          </div>
        </aside>

        <div class="work">
          <div class="upper">
            <div class="viewport">
              <svg class="scene" viewBox="368 235 2608 1542" preserveAspectRatio="xMinYMin meet">
                <defs>
                  <linearGradient id="inside" x1="0" x2="1"><stop offset="0" stop-color="#757677" /><stop offset=".3" stop-color="#7f8383" /><stop offset=".5" stop-color="#848988" /><stop offset="1" stop-color="#868988" /></linearGradient>
                  <linearGradient id="outer" gradientUnits="userSpaceOnUse" x1="1240" x2="1640" y1="720" y2="600"><stop offset="0" stop-color="#515556" /><stop offset=".22" stop-color="#575859" /><stop offset=".45" stop-color="#666768" /><stop offset=".65" stop-color="#6f7071" /><stop offset=".85" stop-color="#7b7b7c" /><stop offset="1" stop-color="#757677" /></linearGradient>
                  <linearGradient id="lower" gradientUnits="userSpaceOnUse" x1="1230" x2="1620" y1="1240" y2="1130"><stop offset="0" stop-color="#868b8a" /><stop offset=".35" stop-color="#818685" /><stop offset=".55" stop-color="#7a7b7c" /><stop offset=".75" stop-color="#696b6c" /><stop offset=".9" stop-color="#595c5e" /><stop offset="1" stop-color="#515658" /></linearGradient>
                  <linearGradient id="base" x1="0" x2="1"><stop offset="0" stop-color="#8a8e8d" /><stop offset=".6" stop-color="#848988" /><stop offset="1" stop-color="#747576" /></linearGradient>
                  <linearGradient id="cut" x1="0" x2="1"><stop offset="0" stop-color="#978381" /><stop offset=".5" stop-color="#8a7776" /><stop offset=".8" stop-color="#775f5f" /><stop offset="1" stop-color="#675455" /></linearGradient>
                  <linearGradient id="cubeTop" x1="0" x2="0" y1="0" y2="1"><stop offset="0" stop-color="#a6a8aa" /><stop offset="1" stop-color="#b2b2b3" /></linearGradient>
                  <linearGradient id="cubeFront" x1="0" x2="0" y1="0" y2="1"><stop offset="0" stop-color="#b0b0b0" /><stop offset="1" stop-color="#959697" /></linearGradient>
                </defs>
                <path d="M1178 498A267 118 0 0 0 1680 497L1427 936Z" fill="url(#outer)" />
                <ellipse cx="1427" cy="457" rx="267" ry="118" fill="url(#inside)" />
                <path d="M1427 936L1176 1374A267 118 0 0 1 1680 1375Z" fill="url(#lower)" />
                <ellipse cx="1427" cy="1414" rx="267" ry="118" fill="url(#base)" />
                <ellipse cx="1427" cy="1175" rx="133" ry="59" fill="url(#cut)" />
                <g fill="none" stroke="#bfc3c3" stroke-width="1" shape-rendering="crispEdges">
                  <path d="M1173 422L1427 936M1508 345L1427 936L1507 1303" />
                  <path d="M1176 1374A267 118 0 0 1 1680 1375" />
                </g>
                <g fill="none" stroke="#fff" stroke-width="1" shape-rendering="crispEdges">
                  <ellipse cx="1427" cy="457" rx="267" ry="118" />
                  <ellipse cx="1427" cy="1175" rx="133" ry="59" />
                  <path d="M1176 1374A267 118 0 1 0 1680 1375" />
                  <path d="M1348 570L1427 936L1680 497M1174 1377L1427 936L1347 1526M1427 936L1682 1449" />
                </g>
                <path d="M1436 1410L1458 1377" stroke="#2f7433" stroke-width="10" stroke-linecap="round" />
                <path d="M1428 1416L1520 1427" stroke="#b95d5f" stroke-width="11" />
                <path d="M1428 1415L1520 1426" stroke="#e68686" stroke-width="4" />
                <path d="M1518 1421L1523 1428L1517 1433Z" fill="#e68686" />
                <path d="M1422 1329L1428 1325L1433 1329V1416L1428 1418L1422 1416Z" fill="#3560a8" />
                <path d="M1427 1329V1416" stroke="#4474c2" stroke-width="3" />
                <g font-family="Inter, sans-serif" font-size="33" font-weight="100" text-anchor="middle">
                  <text x="1435" y="1321" fill="#2f62d0">Z</text>
                  <text x="1463" y="1365" fill="#4a9a4c">Y</text>
                  <text x="1525" y="1418" fill="#c9504d">X</text>
                </g>
                <g stroke-width="1" shape-rendering="crispEdges">
                  <path d="M2288 1170V1316" stroke="#7070e8" />
                  <path d="M2236 1262L2392 1282" stroke="#f08080" />
                  <path d="M2320 1222L2272 1290" stroke="#80e890" />
                  <rect x="2281" y="1261" width="13" height="13" fill="#202830" stroke="#fff" />
                </g>

                <path d="M2683 455A131 69 0 1 0 2945 455A131 69 0 1 0 2683 455ZM2716 452A98 50 0 1 1 2912 452A98 50 0 1 1 2716 452Z" fill="#484e56" fill-rule="evenodd" />
                <path d="M2784 330L2873 340L2849 377L2750 365Z" fill="url(#cubeTop)" stroke="#6a6c6e" />
                <path d="M2750 365L2849 377L2847 468L2753 453Z" fill="url(#cubeFront)" stroke="#6a6c6e" />
                <path d="M2849 377L2873 340L2870 424L2847 468Z" fill="#909192" stroke="#6a6c6e" />
                <path d="M2773 361L2835 367L2829 392L2768 385Z" fill="#9fa2ab" />
                <g font-family="Noto Sans, sans-serif" font-weight="700" text-anchor="middle">
                  <text x="2800" y="426" font-size="21" fill="#4b4f55" transform="rotate(5 2800 417)">FRONT</text>
                  <text x="2860" y="408" font-size="13" fill="#4b4f55" transform="rotate(-64 2861 403)">RIGHT</text>
                  <g font-family="DejaVu Sans, sans-serif" font-style="italic" fill="#a9abad">
                    <text x="2815" y="358" font-size="16" fill="#4b4f55" transform="rotate(5 2815 352)">TOP</text>
                    <text x="2709" y="438" font-size="28" transform="rotate(10 2709 428)">W</text>
                    <text x="2931" y="476" font-size="34" transform="rotate(6 2931 464)">E</text>
                    <text x="2771" y="525" font-size="35">S</text>
                  </g>
                </g>
              </svg>
              <div class="view-controls"><button>+</button><i></i><button>Custom View</button><i></i><button>X-Ray</button></div>
              <div class="wcs"><select aria-label="Coordinate system"><option>WCS</option></select><svg width="18" height="10" viewBox="0 0 18 10"><path d="M1 1H17L9 9Z" fill="#8fa3a8" stroke="#202830" /></svg></div>
              <div class="command">
                <div class="history">{{ history }}<i class="thumb"></i></div>
                <div class="prompt">
                  <svg width="46" height="22" viewBox="0 0 46 22"><path d="M1 3L10 8L1 13" fill="none" stroke="#c8cacd" stroke-width="2" /><path d="M15 17H28V19H15ZM32 6H44L38 13Z" fill="#c8cacd" /></svg>
                  <input v-model="command" type="text" aria-label="Command" placeholder="Type a command" />
                  <i class="caret grey"></i>
                  <svg width="28" height="28" viewBox="0 0 28 28"><path d="M10 10H2V26H25V10H18M8 10V26" fill="none" stroke="#d9d9d9" stroke-width="2" /><path d="M14 17V4" stroke="#7cc5fb" stroke-width="2" /><path d="M14 0L19 7H9Z" fill="#7cc5fb" /></svg>
                </div>
              </div>
            </div>
            <aside class="rail">
              <button class="fold" aria-label="Expand"><svg width="14" height="12" viewBox="0 0 14 12" fill="none" stroke="#a5a8af" stroke-width="2"><path d="M6 1L1 6L6 11M13 1L8 6L13 11" /></svg></button>
              <button class="railtab"><span>Reference Manager</span></button>
              <button class="railtab"><span>Blocks</span></button>
            </aside>
          </div>
          <footer class="status">
            <button class="layout on">Model</button>
            <button class="layout plus" aria-label="Add layout"><svg width="22" height="22" viewBox="0 0 22 22" stroke="#d9d9d9" stroke-width="2"><path d="M11 0V22M0 11H22" /></svg></button>
            <button class="layout">a3rd</button>
            <div class="readout">
              <output>2.698,&nbsp; 2.160 , 0.000</output>
              <button v-for="x in statusA" :key="x.icon" :class="['st', { lit: x.on }]" :aria-label="x.icon"><svg width="32" height="32" viewBox="0 0 32 32" v-html="icons[x.icon]"></svg></button>
              <div class="scale"><select aria-label="Annotation scale"><option>1:1</option></select><i class="caret"></i></div>
              <button class="st" aria-label="Workspace"><svg width="32" height="32" viewBox="0 0 32 32" v-html="icons.workspace"></svg></button>
              <button class="st" aria-label="Settings"><svg width="32" height="32" viewBox="0 0 32 32" v-html="icons.gear"></svg></button>
            </div>
          </footer>
        </div>
      </div>
    </main>

    <nav class="dock">
      <template v-for="a in dock" :key="a.name">
        <i v-if="a.gap" class="sep"></i>
        <button class="app" :aria-label="a.name"><svg width="80" height="80" viewBox="0 0 80 80" v-html="a.art"></svg><i v-if="a.open" class="running"></i></button>
      </template>
    </nav>
  </div>
</template>

<style>
body {
  background: #16202e;
}
</style>

<style scoped>
.desktop {
  display: flex;
  flex-direction: column;
  min-height: 100vh;
  box-sizing: border-box;
  padding-bottom: 11px;
  overflow: hidden;
  font-family: 'Liberation Sans', Arial, sans-serif;
  background: linear-gradient(90deg, #2b3766 0%, #16283a 5%, #141f30 18%, #3c3d6b 24%, #232c4c 32%, #39427a 44%, #2c3158 50%, #131d2c 56%, #1b2540 62%, #3b3c6c 66%, #141f2e 72%, #2d335e 80%, #111d2b 88%, #1a2940 94%, #12202f 100%);
}
button,
select,
input {
  margin: 0;
  padding: 0;
  border: 0;
  background: none;
  color: inherit;
  font: inherit;
}
svg {
  display: block;
  flex: none;
  overflow: visible;
}
a {
  color: inherit;
  text-decoration: none;
}

.menubar {
  display: flex;
  align-items: center;
  height: 75px;
  padding: 0 32px 2px 38px;
  box-sizing: border-box;
  color: #fff;
  font: 500 25px/32px Inter, sans-serif;
  text-shadow: 0 2px 6px rgba(20, 30, 70, 0.4);
  background: linear-gradient(90deg, #3b5086 0%, #42578f 15%, #4d5f9a 28%, #5b69a6 38%, #5d6ba9 60%, #5968a5 80%, #4c5b97 100%);
}
.apple {
  width: 26px;
  height: 32px;
  margin-right: 40px;
}
.menus {
  display: flex;
  gap: 38px;
}
.app-name {
  font-weight: 700;
  font-size: 26px;
  margin-right: 4px;
}
.menus-right {
  margin-left: 466px;
}
.tray {
  display: flex;
  align-items: center;
  gap: 38px;
  margin-left: auto;
}
.tray time {
  display: flex;
  gap: 18px;
  font-size: 26px;
  font-variant-numeric: tabular-nums;
}

.window {
  display: flex;
  flex-direction: column;
  flex: 1;
  position: relative;
  overflow: hidden;
  box-sizing: border-box;
  border-top: 2px solid #8b92a2;
  border-radius: 20px;
  background: #394554;
}
.titlebar {
  display: flex;
  align-items: center;
  height: 54px;
  padding-left: 16px;
  position: relative;
}
.lights {
  display: flex;
  gap: 16px;
}
.lights button {
  width: 24px;
  height: 24px;
  border-radius: 50%;
}
.red {
  background: #fe5f57;
}
.yellow {
  background: #febb2e;
}
.green {
  background: #27c840;
}
h1 {
  display: flex;
  align-items: center;
  gap: 10px;
  flex: 1;
  justify-content: center;
  margin: 0;
  padding: 0 0 4px 116px;
  color: #aaaeb4;
  font: 700 26px/32px 'Noto Sans', sans-serif;
}
h1 span + span {
  margin-left: 16px;
}
.user {
  display: flex;
  align-items: center;
  align-self: flex-start;
  gap: 10px;
  position: relative;
  width: 239px;
  height: 42px;
  padding-left: 12px;
  box-sizing: border-box;
  background: #47526a;
  border: solid #232b35;
  border-width: 0 0 2px 2px;
  color: #f0f0f0;
  font: 400 24px/30px 'Noto Sans', sans-serif;
  white-space: nowrap;
}
.user .caret {
  position: absolute;
  right: 8px;
  top: 14px;
}
.caret {
  width: 0;
  height: 0;
  border: solid transparent;
  border-width: 8px 6px 0;
  border-top-color: #d9d9d9;
}
.caret.grey {
  border-top-color: #a0a4a9;
}
.toolbar {
  display: flex;
  justify-content: center;
  gap: 96px;
  height: 56px;
  padding-top: 8px;
  box-sizing: border-box;
}
.tool-group {
  display: flex;
  gap: 34px;
}
.tool-group button {
  position: relative;
  width: 32px;
  height: 32px;
}
.badge {
  position: absolute;
  top: 0;
  right: 0;
  width: 16px;
  height: 16px;
  border: 2px solid #fff;
  border-radius: 50%;
  background: #f96f31;
}
.tool-group .badge {
  top: -5px;
  right: -14px;
}
.filetabs {
  display: flex;
  height: 44px;
  border-top: 2px solid #222b36;
  border-bottom: 2px solid #202830;
}
.filetabs button {
  border-right: 2px solid #202a35;
}
.cell {
  display: flex;
  align-items: center;
  justify-content: center;
  width: 49px;
}
.cell + .cell {
  width: 47px;
}
.filetab {
  width: 259px;
  padding-left: 8px;
  text-align: left;
  color: #a6abb2;
  font: 400 22px/32px 'Noto Sans', sans-serif;
}
.filetab.active {
  background: #4b5971;
  color: #fff;
  font-size: 23px;
  font-weight: 500;
}

.body {
  display: flex;
  flex: 1;
}
.palette {
  display: flex;
  flex-direction: column;
  width: 368px;
  flex: none;
  box-sizing: border-box;
  background: #3b4352;
}
.palette-tabs {
  display: flex;
  height: 43px;
  font-size: 24px;
}
.palette-tabs .on {
  width: 159px;
  color: #fff;
}
.palette-tabs .off,
.palette-tabs .fold {
  box-sizing: border-box;
  border: solid #202830;
  border-width: 0 0 2px 2px;
}
.palette-tabs .off {
  width: 162px;
  background: #2f323e;
  color: #a6a8ae;
}
.palette-tabs .fold {
  width: 47px;
}
.fold {
  display: flex;
  align-items: center;
  justify-content: center;
}
.section {
  padding: 0 8px 11px;
}
.section::after {
  content: '';
  display: block;
  height: 2px;
  margin-bottom: -2px;
  position: relative;
  top: 11px;
  background: #222a36;
}
h2 {
  display: flex;
  align-items: center;
  height: 44px;
  margin: 0;
  padding: 5px 2px 0 0;
  box-sizing: border-box;
  color: #fff;
  font-weight: 400;
  font-size: 20px;
  line-height: 24px;
}
h2 span {
  flex: 1;
  padding-left: 10px;
}
.twist {
  border: solid transparent;
  border-width: 9px 8px 0;
  border-top-color: #f3f3f3;
}
.grid {
  display: grid;
  grid-template-columns: repeat(8, 44px);
  grid-template-rows: 44px 44px;
  padding-bottom: 1px;
}
.grid.tall {
  grid-template-rows: 44px 44px 48px;
}
.tool {
  display: flex;
  align-items: center;
  justify-content: center;
  align-self: end;
  position: relative;
  width: 44px;
  height: 44px;
}
.tool.big {
  width: 88px;
  height: 88px;
  grid-row-end: span 2;
  grid-column-end: span 2;
}
.more {
  position: absolute;
  right: 0;
  bottom: 0;
  border: solid transparent;
  border-width: 0 0 8px 8px;
  border-bottom-color: #a2a5aa;
}
.palette-foot {
  display: flex;
  gap: 34px;
  align-items: center;
  margin-top: auto;
  padding: 0 31px 10px;
}

.work {
  display: flex;
  flex-direction: column;
  flex: 1;
  background: #202830;
}
.upper {
  display: flex;
  flex: 1;
}
.viewport {
  position: relative;
  flex: 1;
}
.scene {
  position: absolute;
  left: 0;
  top: 0;
  width: 100%;
}
.view-controls {
  display: flex;
  align-items: center;
  gap: 11px;
  position: relative;
  width: max-content;
  padding: 8px 0 0 31px;
  color: #a9a9a6;
  font: 400 23px/30px 'DejaVu Sans', sans-serif;
}
.view-controls i {
  width: 2px;
  height: 27px;
  background: #a9a9a6;
}
.view-controls button:first-child {
  padding-right: 10px;
  font-size: 18px;
}
.view-controls button:nth-child(3) {
  padding-right: 5px;
}
.wcs {
  display: flex;
  align-items: center;
  justify-content: space-between;
  position: absolute;
  right: 112px;
  top: 339px;
  width: 100px;
  height: 24px;
  padding: 0 10px 0 9px;
  box-sizing: border-box;
  border-radius: 8px;
  background: #65727a;
  color: #202830;
}
select {
  appearance: none;
}
.wcs select {
  font-size: 21px;
  line-height: 24px;
}
.command {
  position: absolute;
  left: 50%;
  bottom: 0;
  width: 1000px;
  margin-left: -500px;
  color: #b9bdc2;
  font: 400 20px/30px 'Noto Sans', sans-serif;
}
.history {
  position: relative;
  margin-left: 80px;
  height: 129px;
  padding: 10px 36px 0 11px;
  box-sizing: border-box;
  overflow: hidden;
  white-space: pre-wrap;
  background: #394554;
}
.thumb {
  position: absolute;
  right: 11px;
  bottom: 4px;
  width: 8px;
  height: 42px;
  border-radius: 4px;
  background: #9b9fa4;
}
.prompt {
  display: flex;
  align-items: center;
  height: 50px;
  padding: 0 20px 0 16px;
  background: #394554;
}
.prompt input {
  flex: 1;
  margin-left: 29px;
  outline: 0;
  font-size: 23px;
  font-style: italic;
}
.prompt input::placeholder {
  color: #969ba1;
  opacity: 1;
}
.prompt .caret {
  margin-right: 24px;
}
.rail {
  display: flex;
  flex-direction: column;
  width: 48px;
  padding: 3px 0 2px;
  box-sizing: border-box;
}
.rail .fold {
  height: 44px;
  background: #394554;
  border-bottom: 2px solid #202830;
}
.railtab {
  flex: 1;
  margin-left: 3px;
  padding-right: 5px;
  background: #2f3240;
  border-bottom: 2px solid #202830;
  color: #dcdcdc;
  font-size: 27px;
}
.railtab span {
  display: inline-block;
  writing-mode: vertical-rl;
  transform: rotate(180deg);
}
.status {
  display: flex;
  height: 44px;
  border-top: 2px solid #202830;
  border-bottom: 2px solid #252c38;
  background: linear-gradient(#394453, #363c4b);
  color: #b0b4b9;
  font: 400 22px/30px 'Noto Sans', sans-serif;
}
.layout {
  width: 116px;
  box-sizing: border-box;
  border-right: 2px solid #202830;
}
.layout.on {
  width: 121px;
  background: #46536a;
  color: #f2f2f2;
  font-weight: 500;
}
.layout.plus {
  display: flex;
  align-items: center;
  justify-content: center;
  width: 46px;
}
.readout {
  display: flex;
  align-items: center;
  margin-left: auto;
  padding: 0 10px 0 22px;
  border-left: 2px solid #202830;
}
.readout output {
  width: 224px;
  font-size: 23px;
  white-space: nowrap;
}
.st {
  display: flex;
  align-items: center;
  justify-content: center;
  width: 40px;
  height: 40px;
  margin-right: 4px;
}
.st:last-child {
  margin-right: 0;
}
.lit {
  background: #5b89bb;
}
.scale {
  display: flex;
  align-items: center;
  justify-content: space-between;
  width: 46px;
  margin: 0 14px 0 -4px;
}
.scale select {
  font-size: 21px;
}

.dock {
  display: flex;
  height: 127px;
  box-sizing: border-box;
  margin: 3px 90px 0 88px;
  padding: 0 1px 0 5px;
  border: 2px solid #56627e;
  border-radius: 38px;
  background: linear-gradient(90deg, #1f3340 0%, #22364a 10%, #45456b 20%, #3a4870 30%, #524f84 42%, #35416a 50%, #263652 54%, #1e3240 62%, #1f3240 72%, #37375f 80%, #2f3c60 88%, #1d2d3e 96%, #1b2a38 100%);
}
.app {
  display: flex;
  flex-direction: column;
  align-items: center;
  flex: 1;
  min-width: 0;
  padding-top: 17px;
}
.running {
  width: 7px;
  height: 7px;
  margin-top: 18px;
  border-radius: 50%;
  background: #a9b7d6;
}
.sep {
  flex: none;
  width: 2px;
  height: 96px;
  margin: 14px 23px 0;
  background: #66728a;
}
</style>
